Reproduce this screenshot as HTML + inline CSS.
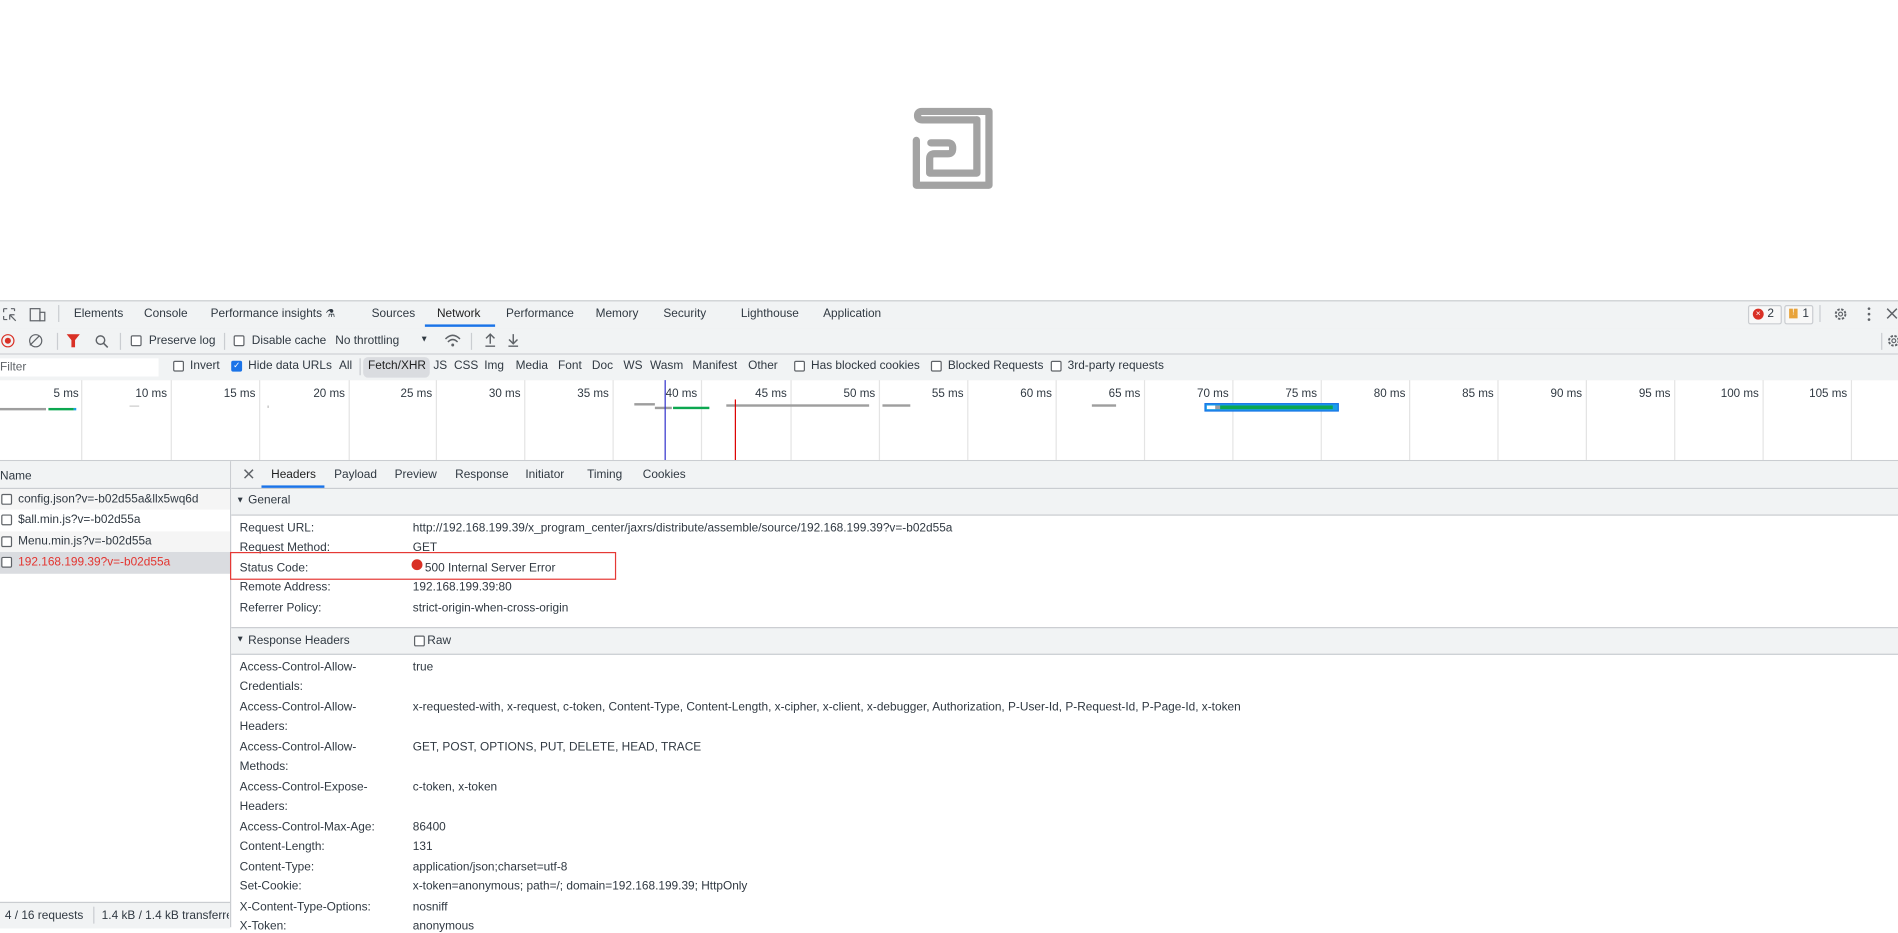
<!DOCTYPE html>
<html><head><meta charset="utf-8"><style>
html,body{margin:0;padding:0;width:1898px;height:927px;overflow:hidden;background:#fff}
#s{position:absolute;left:0;top:0;width:1568px;height:766px;transform:scale(1.2105);transform-origin:0 0;font-family:"Liberation Sans",sans-serif;font-size:9.8px;color:#303942}
.a{position:absolute;white-space:nowrap}
.bar{position:absolute;left:0;width:1568px;background:#f1f3f4;border-bottom:1px solid #cacdd1}
.cb{position:absolute;width:7px;height:7px;border:1px solid #5f6368;border-radius:1.5px;background:#fff}
.sep{position:absolute;width:1px;height:14px;background:#cacdd1}
.gl{position:absolute;top:314px;height:66px;width:1px;background:#e4e4e4}
.tl{position:absolute;top:320px;font-size:9.6px;text-align:right;width:40px}
.r{position:absolute;left:198px}
.v{position:absolute;left:341px}
</style></head><body><div id="s">
<!-- logo -->
<svg class="a" style="left:753px;top:89px" width="68" height="68" viewBox="0 0 68 68">
<g fill="none" stroke="#a3a3a3" stroke-width="6" stroke-linecap="round" stroke-linejoin="round">
<path d="M54 10 H9 Q5 10 5 6.5 Q5 3 9 3 H64 V64 H4 V27"/>
<path d="M54 10 V54 H15 V42 Q15 38 19 38 H30 Q34 38 34 34 V33 Q34 29 30 29 H16"/>
</g>
</svg>

<!-- tab bar -->
<div class="bar" style="top:248px;height:22px;border-top:1px solid #cacdd1"></div>
<svg class="a" style="left:2px;top:254px" width="12" height="12"><path d="M1 1h3M1 1v3M1 7v3M1 10h3M7 1h3M10 1v2M6 6l5 5M6 6v4M6 6h4" stroke="#5f6368" fill="none" stroke-width="1"/></svg>
<svg class="a" style="left:24px;top:254px" width="14" height="12"><rect x="1" y="1" width="8" height="10" fill="none" stroke="#5f6368"/><rect x="9" y="4" width="4" height="7" fill="none" stroke="#5f6368"/></svg>
<div class="sep" style="left:48px;top:252px"></div>
<span class="a" style="left:61px;top:254px">Elements</span>
<span class="a" style="left:119px;top:254px">Console</span>
<span class="a" style="left:174px;top:254px">Performance insights <span style="font-size:9px">⚗</span></span>
<span class="a" style="left:307px;top:254px">Sources</span>
<span class="a" style="left:361px;top:254px;color:#1f1f1f">Network</span>
<div class="a" style="left:351px;top:268px;width:58px;height:2px;background:#1a73e8"></div>
<span class="a" style="left:418px;top:254px">Performance</span>
<span class="a" style="left:492px;top:254px">Memory</span>
<span class="a" style="left:548px;top:254px">Security</span>
<span class="a" style="left:612px;top:254px">Lighthouse</span>
<span class="a" style="left:680px;top:254px">Application</span>
<div class="a" style="left:1444px;top:252px;width:26px;height:14px;border:1px solid #cacdd1;border-radius:2px;background:#f8f8f8"></div>
<div class="a" style="left:1448px;top:255px;width:9px;height:9px;border-radius:50%;background:#d93025;color:#fff;font-size:7px;text-align:center;line-height:9px">×</div>
<span class="a" style="left:1460px;top:254px">2</span>
<div class="a" style="left:1474px;top:252px;width:22px;height:14px;border:1px solid #cacdd1;border-radius:2px;background:#f8f8f8"></div>
<div class="a" style="left:1478px;top:255px;width:7px;height:8px;background:#e8a33a;color:#fff;font-size:7px;text-align:center;line-height:8px">!</div>
<span class="a" style="left:1489px;top:254px">1</span>
<div class="sep" style="left:1503px;top:252px"></div>
<svg class="a" style="left:1514px;top:253px" width="13" height="13" viewBox="0 0 13 13"><circle cx="6.5" cy="6.5" r="4" fill="none" stroke="#5f6368" stroke-width="1.6" stroke-dasharray="2 1.2"/><circle cx="6.5" cy="6.5" r="1.6" fill="none" stroke="#5f6368"/></svg>
<svg class="a" style="left:1542px;top:253px" width="4" height="13"><circle cx="2" cy="2" r="1.1" fill="#5f6368"/><circle cx="2" cy="6.5" r="1.1" fill="#5f6368"/><circle cx="2" cy="11" r="1.1" fill="#5f6368"/></svg>
<svg class="a" style="left:1558px;top:254px" width="10" height="10"><path d="M1 1L9 9M9 1L1 9" stroke="#5f6368" stroke-width="1.2"/></svg>

<!-- toolbar -->
<div class="bar" style="top:271px;height:21px"></div>
<div class="a" style="left:1px;top:276px;width:9px;height:9px;border:1.5px solid #d93025;border-radius:50%"></div>
<div class="a" style="left:4px;top:279px;width:5px;height:5px;background:#d93025;border-radius:50%"></div>
<div class="a" style="left:24px;top:276px;width:9px;height:9px;border:1.3px solid #5f6368;border-radius:50%"></div>
<div class="a" style="left:28px;top:276px;width:1.3px;height:11px;background:#5f6368;transform:rotate(45deg)"></div>
<div class="sep" style="left:47px;top:275px"></div>
<svg class="a" style="left:55px;top:276px" width="11" height="11"><path d="M0 0H11L7 5V11L4 11V5Z" fill="#d93025"/></svg>
<svg class="a" style="left:78px;top:276px" width="12" height="12"><circle cx="5" cy="5" r="3.5" fill="none" stroke="#5f6368" stroke-width="1.2"/><path d="M7.5 7.5L11 11" stroke="#5f6368" stroke-width="1.3"/></svg>
<div class="sep" style="left:99px;top:275px"></div>
<div class="cb" style="left:108px;top:277px"></div>
<span class="a" style="left:123px;top:276px">Preserve log</span>
<div class="sep" style="left:185px;top:275px"></div>
<div class="cb" style="left:193px;top:277px"></div>
<span class="a" style="left:208px;top:276px">Disable cache</span>
<span class="a" style="left:277px;top:276px">No throttling</span>
<span class="a" style="left:347px;top:277px;font-size:7px">▼</span>
<svg class="a" style="left:367px;top:275px" width="14" height="12"><path d="M1 5Q7 -1 13 5M3 7.5Q7 3.5 11 7.5" fill="none" stroke="#5f6368" stroke-width="1.2"/><circle cx="7" cy="10" r="1.2" fill="#5f6368"/></svg>
<div class="sep" style="left:389px;top:275px"></div>
<svg class="a" style="left:400px;top:275px" width="10" height="12"><path d="M5 9V1M1.5 4.5L5 1L8.5 4.5M1 11H9" fill="none" stroke="#5f6368" stroke-width="1.2"/></svg>
<svg class="a" style="left:419px;top:275px" width="10" height="12"><path d="M5 1V9M1.5 5.5L5 9L8.5 5.5M1 11H9" fill="none" stroke="#5f6368" stroke-width="1.2"/></svg>
<div class="sep" style="left:1554px;top:275px"></div>
<svg class="a" style="left:1558px;top:275px" width="13" height="13" viewBox="0 0 13 13"><circle cx="6.5" cy="6.5" r="4" fill="none" stroke="#5f6368" stroke-width="1.6" stroke-dasharray="2 1.2"/><circle cx="6.5" cy="6.5" r="1.6" fill="none" stroke="#5f6368"/></svg>

<!-- filter row -->
<div class="bar" style="top:293px;height:21px"></div>
<div class="a" style="left:0;top:296px;width:131px;height:15px;background:#fff"></div>
<span class="a" style="left:0;top:298px;color:#5f6368">Filter</span>
<div class="cb" style="left:143px;top:298px"></div><span class="a" style="left:157px;top:297px">Invert</span>
<div class="cb" style="left:191px;top:298px;background:#1a73e8;border-color:#1a73e8;color:#fff;font-size:7px;line-height:7px;text-align:center">✓</div><span class="a" style="left:205px;top:297px">Hide data URLs</span>
<span class="a" style="left:280px;top:297px">All</span>
<div class="sep" style="left:297px;top:296px"></div>
<div class="a" style="left:300px;top:295px;width:55px;height:17px;background:#dadce0;border-radius:4px"></div>
<span class="a" style="left:304px;top:297px;color:#1f1f1f">Fetch/XHR</span>
<span class="a" style="left:358px;top:297px">JS</span>
<span class="a" style="left:375px;top:297px">CSS</span>
<span class="a" style="left:400px;top:297px">Img</span>
<span class="a" style="left:426px;top:297px">Media</span>
<span class="a" style="left:461px;top:297px">Font</span>
<span class="a" style="left:489px;top:297px">Doc</span>
<span class="a" style="left:515px;top:297px">WS</span>
<span class="a" style="left:537px;top:297px">Wasm</span>
<span class="a" style="left:572px;top:297px">Manifest</span>
<span class="a" style="left:618px;top:297px">Other</span>
<div class="cb" style="left:656px;top:298px"></div><span class="a" style="left:670px;top:297px">Has blocked cookies</span>
<div class="cb" style="left:769px;top:298px"></div><span class="a" style="left:783px;top:297px">Blocked Requests</span>
<div class="cb" style="left:868px;top:298px"></div><span class="a" style="left:882px;top:297px">3rd-party requests</span>

<!-- timeline -->
<div class="a" style="left:0;top:314px;width:1568px;height:66px;background:#fff;border-bottom:1px solid #cacdd1"></div>
<div class="gl" style="left:67px"></div><div class="tl" style="left:25px">5 ms</div>
<div class="gl" style="left:141px"></div><div class="tl" style="left:98px">10 ms</div>
<div class="gl" style="left:214px"></div><div class="tl" style="left:171px">15 ms</div>
<div class="gl" style="left:288px"></div><div class="tl" style="left:245px">20 ms</div>
<div class="gl" style="left:360px"></div><div class="tl" style="left:317px">25 ms</div>
<div class="gl" style="left:433px"></div><div class="tl" style="left:390px">30 ms</div>
<div class="gl" style="left:506px"></div><div class="tl" style="left:463px">35 ms</div>
<div class="gl" style="left:579px"></div><div class="tl" style="left:536px">40 ms</div>
<div class="gl" style="left:653px"></div><div class="tl" style="left:610px">45 ms</div>
<div class="gl" style="left:726px"></div><div class="tl" style="left:683px">50 ms</div>
<div class="gl" style="left:799px"></div><div class="tl" style="left:756px">55 ms</div>
<div class="gl" style="left:872px"></div><div class="tl" style="left:829px">60 ms</div>
<div class="gl" style="left:945px"></div><div class="tl" style="left:902px">65 ms</div>
<div class="gl" style="left:1018px"></div><div class="tl" style="left:975px">70 ms</div>
<div class="gl" style="left:1091px"></div><div class="tl" style="left:1048px">75 ms</div>
<div class="gl" style="left:1164px"></div><div class="tl" style="left:1121px">80 ms</div>
<div class="gl" style="left:1237px"></div><div class="tl" style="left:1194px">85 ms</div>
<div class="gl" style="left:1310px"></div><div class="tl" style="left:1267px">90 ms</div>
<div class="gl" style="left:1383px"></div><div class="tl" style="left:1340px">95 ms</div>
<div class="gl" style="left:1456px"></div><div class="tl" style="left:1413px">100 ms</div>
<div class="gl" style="left:1529px"></div><div class="tl" style="left:1486px">105 ms</div>
<div class="a" style="left:0;top:337px;width:38px;height:2px;background:#9e9e9e"></div>
<div class="a" style="left:40px;top:337px;width:21px;height:2px;background:#0ca750"></div>
<div class="a" style="left:61px;top:337px;width:2px;height:2px;background:#1a9fe8"></div>
<div class="a" style="left:107px;top:335px;width:8px;height:1px;background:#ccc"></div>
<div class="a" style="left:221px;top:335px;width:1px;height:2px;background:#bbb"></div>
<div class="a" style="left:524px;top:333px;width:17px;height:2px;background:#9e9e9e"></div>
<div class="a" style="left:541px;top:336px;width:14px;height:2px;background:#9e9e9e"></div>
<div class="a" style="left:556px;top:336px;width:30px;height:2px;background:#0ca750"></div>
<div class="a" style="left:600px;top:334px;width:118px;height:2px;background:#9e9e9e"></div>
<div class="a" style="left:729px;top:334px;width:23px;height:2px;background:#9e9e9e"></div>
<div class="a" style="left:902px;top:334px;width:20px;height:2px;background:#9e9e9e"></div>
<div class="a" style="left:995px;top:333px;width:109px;height:5px;border:1px solid #1a73e8;background:#1a9fe8"></div>
<div class="a" style="left:997px;top:335px;width:7px;height:3px;background:#fff"></div>
<div class="a" style="left:1004px;top:335px;width:4px;height:3px;background:#9e9e9e"></div>
<div class="a" style="left:1008px;top:335px;width:93px;height:3px;background:#0ca750"></div>
<div class="a" style="left:549px;top:314px;width:1px;height:66px;background:#3333cc"></div>
<div class="a" style="left:607px;top:330px;width:1px;height:50px;background:#d00"></div>

<!-- left pane -->
<div class="a" style="left:0;top:381px;width:190px;height:22px;background:#f1f3f4;border-bottom:1px solid #cacdd1"></div>
<span class="a" style="left:0;top:388px">Name</span>
<div class="a" style="left:0;top:404px;width:190px;height:17px;background:#f5f5f5"></div>
<div class="a" style="left:0;top:439px;width:190px;height:17px;background:#f5f5f5"></div>
<div class="a" style="left:0;top:456px;width:190px;height:18px;background:#dadce0"></div>
<div class="cb" style="left:1px;top:408px"></div><span class="a" style="left:15px;top:407px">config.json?v=-b02d55a&amp;llx5wq6d</span>
<div class="cb" style="left:1px;top:425px"></div><span class="a" style="left:15px;top:424px">$all.min.js?v=-b02d55a</span>
<div class="cb" style="left:1px;top:443px"></div><span class="a" style="left:15px;top:442px">Menu.min.js?v=-b02d55a</span>
<div class="cb" style="left:1px;top:460px"></div><span class="a" style="left:15px;top:459px;color:#e3342f">192.168.199.39?v=-b02d55a</span>
<div class="a" style="left:0;top:745px;width:190px;height:21px;background:#f1f3f4;border-top:1px solid #cacdd1"></div>
<span class="a" style="left:4px;top:751px">4 / 16 requests</span>
<div class="sep" style="left:77px;top:749px"></div>
<span class="a" style="left:84px;top:751px;width:105px;overflow:hidden">1.4 kB / 1.4 kB transferred</span>
<div class="a" style="left:190px;top:381px;width:1px;height:385px;background:#cacdd1"></div>

<!-- right pane -->
<div class="a" style="left:191px;top:381px;width:1377px;height:22px;background:#f1f3f4;border-bottom:1px solid #cacdd1"></div>
<svg class="a" style="left:201px;top:387px" width="9" height="9"><path d="M1 1L8 8M8 1L1 8" stroke="#5f6368" stroke-width="1.2"/></svg>
<span class="a" style="left:224px;top:387px;color:#1f1f1f">Headers</span>
<div class="a" style="left:216px;top:401px;width:52px;height:2px;background:#1a73e8"></div>
<span class="a" style="left:276px;top:387px">Payload</span>
<span class="a" style="left:326px;top:387px">Preview</span>
<span class="a" style="left:376px;top:387px">Response</span>
<span class="a" style="left:434px;top:387px">Initiator</span>
<span class="a" style="left:485px;top:387px">Timing</span>
<span class="a" style="left:531px;top:387px">Cookies</span>

<div class="a" style="left:191px;top:404px;width:1377px;height:21px;background:#f1f3f4;border-bottom:1px solid #cacdd1"></div>
<span class="a" style="left:195px;top:410px;font-size:7px">▼</span><span class="a" style="left:205px;top:408px">General</span>
<span class="r a" style="top:431px">Request URL:</span><span class="v a" style="top:431px">http://192.168.199.39/x_program_center/jaxrs/distribute/assemble/source/192.168.199.39?v=-b02d55a</span>
<span class="r a" style="top:447px">Request Method:</span><span class="v a" style="top:447px">GET</span>
<span class="r a" style="top:464px">Status Code:</span><span class="a" style="left:340px;top:462px;width:9px;height:9px;border-radius:50%;background:#d93025"></span><span class="a" style="left:351px;top:464px">500 Internal Server Error</span>
<span class="r a" style="top:480px">Remote Address:</span><span class="v a" style="top:480px">192.168.199.39:80</span>
<span class="r a" style="top:497px">Referrer Policy:</span><span class="v a" style="top:497px">strict-origin-when-cross-origin</span>
<div class="a" style="left:190px;top:456px;width:317px;height:21px;border:1.6px solid #e53935"></div>

<div class="a" style="left:191px;top:518px;width:1377px;height:21px;background:#f1f3f4;border-top:1px solid #cacdd1;border-bottom:1px solid #cacdd1"></div>
<span class="a" style="left:195px;top:525px;font-size:7px">▼</span><span class="a" style="left:205px;top:524px">Response Headers</span>
<div class="cb" style="left:342px;top:525px"></div><span class="a" style="left:353px;top:524px">Raw</span>

<span class="r a" style="top:546px">Access-Control-Allow-</span><span class="v a" style="top:546px">true</span>
<span class="r a" style="top:562px">Credentials:</span>
<span class="r a" style="top:579px">Access-Control-Allow-</span><span class="v a" style="top:579px">x-requested-with, x-request, c-token, Content-Type, Content-Length, x-cipher, x-client, x-debugger, Authorization, P-User-Id, P-Request-Id, P-Page-Id, x-token</span>
<span class="r a" style="top:595px">Headers:</span>
<span class="r a" style="top:612px">Access-Control-Allow-</span><span class="v a" style="top:612px">GET, POST, OPTIONS, PUT, DELETE, HEAD, TRACE</span>
<span class="r a" style="top:628px">Methods:</span>
<span class="r a" style="top:645px">Access-Control-Expose-</span><span class="v a" style="top:645px">c-token, x-token</span>
<span class="r a" style="top:661px">Headers:</span>
<span class="r a" style="top:678px">Access-Control-Max-Age:</span><span class="v a" style="top:678px">86400</span>
<span class="r a" style="top:694px">Content-Length:</span><span class="v a" style="top:694px">131</span>
<span class="r a" style="top:711px">Content-Type:</span><span class="v a" style="top:711px">application/json;charset=utf-8</span>
<span class="r a" style="top:727px">Set-Cookie:</span><span class="v a" style="top:727px">x-token=anonymous; path=/; domain=192.168.199.39; HttpOnly</span>
<span class="r a" style="top:744px">X-Content-Type-Options:</span><span class="v a" style="top:744px">nosniff</span>
<span class="r a" style="top:760px">X-Token:</span><span class="v a" style="top:760px">anonymous</span>
</div></body></html>
